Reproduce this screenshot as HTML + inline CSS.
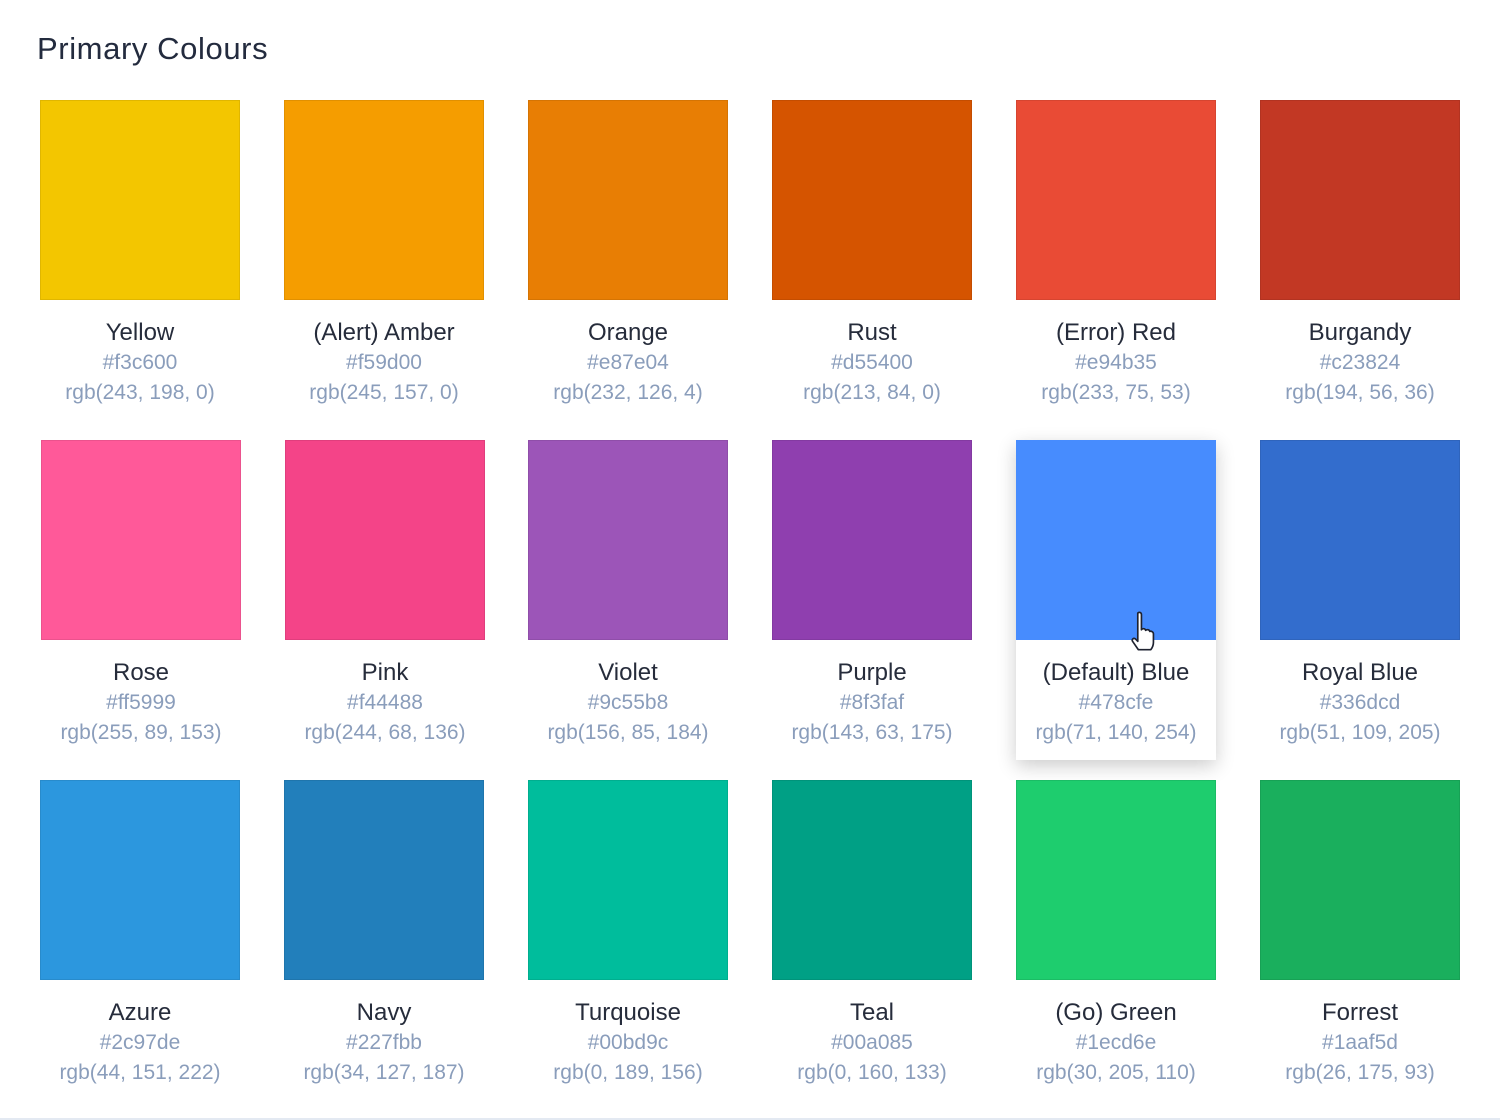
<!DOCTYPE html>
<html><head><style>
body{margin:0;background:#fff;width:1500px;height:1120px;position:relative;overflow:hidden;font-family:"Liberation Sans",sans-serif}
h1{position:absolute;left:37px;top:31px;margin:0;font-size:31px;font-weight:normal;color:#232b3e;letter-spacing:0.6px}
.c{position:absolute;width:200px;height:320px;text-align:center}
.s{width:200px;height:200px;box-sizing:border-box;border:1px solid rgba(0,0,0,0.08)}
.n{margin-top:18px;font-size:24px;color:#262c3b;line-height:30px}
.h{font-size:21px;color:#8a9dbb;line-height:30px}
.card{box-shadow:0 6px 18px rgba(0,0,0,0.2)}
.line{position:absolute;left:0;right:0;top:1118px;height:2px;background:#e3e9f2}
</style></head><body>
<h1>Primary Colours</h1>
<div class="c" style="left:40px;top:100px"><div class="s" style="background:#f3c600"></div><div class="n">Yellow</div><div class="h">#f3c600</div><div class="h">rgb(243, 198, 0)</div></div>
<div class="c" style="left:284px;top:100px"><div class="s" style="background:#f59d00"></div><div class="n">(Alert) Amber</div><div class="h">#f59d00</div><div class="h">rgb(245, 157, 0)</div></div>
<div class="c" style="left:528px;top:100px"><div class="s" style="background:#e87e04"></div><div class="n">Orange</div><div class="h">#e87e04</div><div class="h">rgb(232, 126, 4)</div></div>
<div class="c" style="left:772px;top:100px"><div class="s" style="background:#d55400"></div><div class="n">Rust</div><div class="h">#d55400</div><div class="h">rgb(213, 84, 0)</div></div>
<div class="c" style="left:1016px;top:100px"><div class="s" style="background:#e94b35"></div><div class="n">(Error) Red</div><div class="h">#e94b35</div><div class="h">rgb(233, 75, 53)</div></div>
<div class="c" style="left:1260px;top:100px"><div class="s" style="background:#c23824"></div><div class="n">Burgandy</div><div class="h">#c23824</div><div class="h">rgb(194, 56, 36)</div></div>

<div class="c" style="left:41px;top:440px"><div class="s" style="background:#ff5999"></div><div class="n">Rose</div><div class="h">#ff5999</div><div class="h">rgb(255, 89, 153)</div></div>
<div class="c" style="left:285px;top:440px"><div class="s" style="background:#f44488"></div><div class="n">Pink</div><div class="h">#f44488</div><div class="h">rgb(244, 68, 136)</div></div>
<div class="c" style="left:528px;top:440px"><div class="s" style="background:#9c55b8"></div><div class="n">Violet</div><div class="h">#9c55b8</div><div class="h">rgb(156, 85, 184)</div></div>
<div class="c" style="left:772px;top:440px"><div class="s" style="background:#8f3faf"></div><div class="n">Purple</div><div class="h">#8f3faf</div><div class="h">rgb(143, 63, 175)</div></div>
<div class="c card" style="left:1016px;top:440px"><div class="s" style="background:#478cfe;border:none"></div><div class="n">(Default) Blue</div><div class="h">#478cfe</div><div class="h">rgb(71, 140, 254)</div>
<svg style="position:absolute;left:110px;top:170px" width="34" height="48" viewBox="0 0 26 46"><path d="M8 3c1.5-1.5 3.5-.5 3.5 1.5V19c1-1.5 3.5-1.5 4 .5 1-1 3.5-1 4 1 1.5-.5 3.5.5 3.5 2.5v8c0 3-1 5-2.5 7H8.5L3 30c-1-1.5.5-3.5 2.5-2.5L8 30V4z" fill="#fff" stroke="#1e2230" stroke-width="1.6" stroke-linejoin="round"/></svg></div>
<div class="c" style="left:1260px;top:440px"><div class="s" style="background:#336dcd"></div><div class="n">Royal Blue</div><div class="h">#336dcd</div><div class="h">rgb(51, 109, 205)</div></div>

<div class="c" style="left:40px;top:780px"><div class="s" style="background:#2c97de"></div><div class="n">Azure</div><div class="h">#2c97de</div><div class="h">rgb(44, 151, 222)</div></div>
<div class="c" style="left:284px;top:780px"><div class="s" style="background:#227fbb"></div><div class="n">Navy</div><div class="h">#227fbb</div><div class="h">rgb(34, 127, 187)</div></div>
<div class="c" style="left:528px;top:780px"><div class="s" style="background:#00bd9c"></div><div class="n">Turquoise</div><div class="h">#00bd9c</div><div class="h">rgb(0, 189, 156)</div></div>
<div class="c" style="left:772px;top:780px"><div class="s" style="background:#00a085"></div><div class="n">Teal</div><div class="h">#00a085</div><div class="h">rgb(0, 160, 133)</div></div>
<div class="c" style="left:1016px;top:780px"><div class="s" style="background:#1ecd6e"></div><div class="n">(Go) Green</div><div class="h">#1ecd6e</div><div class="h">rgb(30, 205, 110)</div></div>
<div class="c" style="left:1260px;top:780px"><div class="s" style="background:#1aaf5d"></div><div class="n">Forrest</div><div class="h">#1aaf5d</div><div class="h">rgb(26, 175, 93)</div></div>
<div class="line"></div>
</body></html>
